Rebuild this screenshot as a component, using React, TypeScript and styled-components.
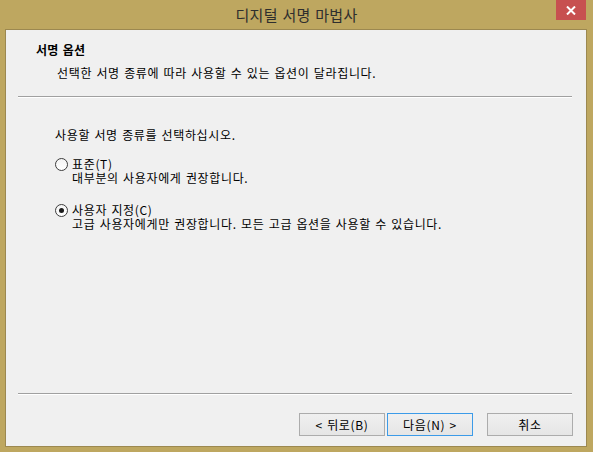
import React from "react";
import styled, { createGlobalStyle } from "styled-components";

const Global = createGlobalStyle`
  html, body { margin: 0; padding: 0; }
  body { font-family: "Noto Sans CJK KR", "Noto Sans", sans-serif; }
`;

const Window = styled.div`
  width: 593px;
  height: 452px;
  background: #bea760;
  display: flex;
  flex-direction: column;
  box-sizing: border-box;
  padding: 0 6px 5px 5px;
`;

const TitleBar = styled.div`
  height: 29px;
  display: grid;
  grid-template-columns: 1fr auto 1fr;
  align-items: start;
  margin: 0 -6px 0 -5px;
`;

const Title = styled.div`
  grid-column: 2;
  font-size: 15px;
  line-height: 15px;
  padding-top: 7px;
  color: #2e2e2e;
  word-spacing: 1px;
  letter-spacing: 0.3px;
`;

const CloseButton = styled.div`
  grid-column: 3;
  justify-self: end;
  margin-right: 7px;
  width: 30px;
  height: 20px;
  background: #c75050;
  display: flex;
  align-items: center;
  justify-content: center;
`;

const Client = styled.div`
  flex: 1;
  background: #f0f0f0;
  border: 1px solid #9c8850;
  display: flex;
  flex-direction: column;
  font-size: 12px;
  line-height: 14px;
  color: #000;
  word-spacing: 1px;
  letter-spacing: 0.65px;
`;

const Header = styled.div`
  height: 66px;
  box-sizing: border-box;
  padding: 13px 0 0 30px;
`;

const HeaderTitle = styled.div`
  font-weight: bold;
  letter-spacing: 0.3px;
`;

const HeaderSub = styled.div`
  margin: 9px 0 0 21px;
`;

const Separator = styled.div`
  height: 1px;
  background: #a0a0a0;
  border-bottom: 1px solid #ffffff;
  margin: 0 14px 0 12px;
`;

const Content = styled.div`
  flex: 1;
  padding: 30px 0 0 49px;
  display: flex;
  flex-direction: column;
`;

const Prompt = styled.div`
  margin-bottom: 15px;
`;

const Option = styled.div<{ $gap?: number }>`
  display: grid;
  grid-template-columns: 17px auto;
  margin-top: ${(p) => p.$gap ?? 0}px;
`;

const Radio = styled.span<{ $checked?: boolean }>`
  width: 13px;
  height: 13px;
  box-sizing: border-box;
  border-radius: 50%;
  border: 1px solid #3c3c3c;
  background: linear-gradient(#f4f4f4, #ffffff);
  display: flex;
  align-items: center;
  justify-content: center;
  margin-top: 1px;
  &::after {
    content: "";
    width: 5px;
    height: 5px;
    border-radius: 50%;
    background: #1a1a1a;
    display: ${(p) => (p.$checked ? "block" : "none")};
  }
`;

const OptionLabel = styled.div``;

const OptionDesc = styled.div`
  grid-column: 2;
`;

const Footer = styled.div`
  display: flex;
  flex-direction: column;
`;

const ButtonRow = styled.div`
  display: flex;
  justify-content: flex-end;
  padding: 18px 13px 10px 0;
`;

const Button = styled.div<{ $default?: boolean; $gap?: number }>`
  width: 86px;
  height: 23px;
  box-sizing: border-box;
  margin-left: ${(p) => p.$gap ?? 0}px;
  border: 1px solid ${(p) => (p.$default ? "#3c9be8" : "#acacac")};
  background: linear-gradient(#f0f0f0, #e5e5e5);
  display: flex;
  align-items: center;
  justify-content: center;
  font-size: 12px;
  color: #000;
  word-spacing: 1px;
  letter-spacing: 0.65px;
`;

export default function App() {
  return (
    <>
      <Global />
      <Window>
        <TitleBar>
          <Title>디지털 서명 마법사</Title>
          <CloseButton>
            <svg width="10" height="9" viewBox="0 0 10 9">
              <path d="M1 0.5 L9 8.5 M9 0.5 L1 8.5" stroke="#fff" strokeWidth="2" />
            </svg>
          </CloseButton>
        </TitleBar>
        <Client>
          <Header>
            <HeaderTitle>서명 옵션</HeaderTitle>
            <HeaderSub>선택한 서명 종류에 따라 사용할 수 있는 옵션이 달라집니다.</HeaderSub>
          </Header>
          <Separator />
          <Content>
            <Prompt>사용할 서명 종류를 선택하십시오.</Prompt>
            <Option>
              <Radio />
              <OptionLabel>표준(T)</OptionLabel>
              <OptionDesc>대부분의 사용자에게 권장합니다.</OptionDesc>
            </Option>
            <Option $gap={18}>
              <Radio $checked />
              <OptionLabel>사용자 지정(C)</OptionLabel>
              <OptionDesc>고급 사용자에게만 권장합니다. 모든 고급 옵션을 사용할 수 있습니다.</OptionDesc>
            </Option>
          </Content>
          <Footer>
            <Separator />
            <ButtonRow>
              <Button>&lt; 뒤로(B)</Button>
              <Button $default $gap={2}>다음(N) &gt;</Button>
              <Button $gap={14}>취소</Button>
            </ButtonRow>
          </Footer>
        </Client>
      </Window>
    </>
  );
}
